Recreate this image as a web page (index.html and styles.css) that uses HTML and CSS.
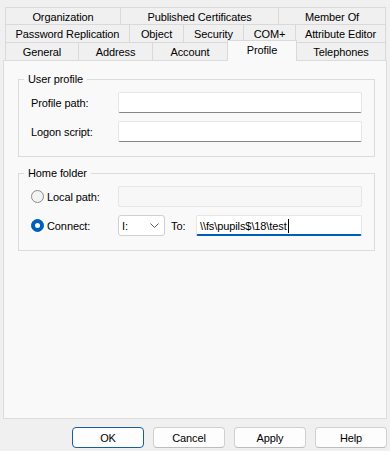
FILE: index.html
```html
<!DOCTYPE html>
<html>
<head>
<meta charset="utf-8">
<link rel="stylesheet" href="styles.css">
</head>
<body>
<div class="dialog">
  <div class="tabs">
    <div class="tab-row row1">
      <div class="tab t-org">Organization</div>
      <div class="tab t-pub">Published Certificates</div>
      <div class="tab t-last">Member Of</div>
    </div>
    <div class="tab-row">
      <div class="tab t-pwd">Password Replication</div>
      <div class="tab t-obj">Object</div>
      <div class="tab t-sec">Security</div>
      <div class="tab t-com">COM+</div>
      <div class="tab t-last">Attribute Editor</div>
    </div>
    <div class="tab-row row3">
      <div class="tab t-gen">General</div>
      <div class="tab t-addr">Address</div>
      <div class="tab t-acc">Account</div>
      <div class="tab t-prof selected">Profile</div>
      <div class="tab t-last">Telephones</div>
    </div>
  </div>
  <div class="panel">
    <fieldset class="group group-user">
      <legend>User profile</legend>
      <div class="field-row">
        <label class="label">Profile path:</label>
        <div class="input"></div>
      </div>
      <div class="field-row">
        <label class="label">Logon script:</label>
        <div class="input"></div>
      </div>
    </fieldset>
    <fieldset class="group group-home">
      <legend>Home folder</legend>
      <div class="field-row">
        <label class="label radio-label"><span class="radio"></span>Local path:</label>
        <div class="input disabled"></div>
      </div>
      <div class="field-row">
        <label class="label radio-label"><span class="radio checked"></span>Connect:</label>
        <div class="combo">
          <span class="combo-value">I:</span>
          <svg class="chevron" width="9" height="5" viewBox="0 0 9 5"><path d="M0.5 0.5 L4.5 4.5 L8.5 0.5" fill="none" stroke="#5a5a5a" stroke-width="1"/></svg>
        </div>
        <span class="to-label">To:</span>
        <div class="input focused"><span class="input-text">\\fs\pupils$\18\test</span><span class="caret"></span></div>
      </div>
    </fieldset>
  </div>
  <div class="buttons">
    <button class="btn default">OK</button>
    <button class="btn">Cancel</button>
    <button class="btn">Apply</button>
    <button class="btn">Help</button>
  </div>
</div>
</body>
</html>
```
FILE: styles.css
```css
* { box-sizing: border-box; }
html, body {
  margin: 0;
  padding: 0;
  background: #f0f0f0;
}
body {
  font-family: "Liberation Sans", Arial, sans-serif;
  font-size: 11px;
  letter-spacing: -0.1px;
  color: #000;
  width: 390px;
  height: 451px;
  overflow: hidden;
}
.dialog {
  padding: 7px 3px 0 3px;
}
.tabs {
  width: 381px;
  margin-left: 2px;
}
.tab-row {
  display: flex;
  height: 18px;
}
.tab-row.row1 { height: 17px; }
.tab-row.row3 { align-items: flex-end; }
.tab {
  display: flex;
  align-items: center;
  justify-content: center;
  height: 100%;
  border-top: 1px solid #d9d9d9;
  border-left: 1px solid #d9d9d9;
  background: #f0f0f0;
  white-space: nowrap;
  padding-top: 1px;
}
.tab.t-last { flex: 1; border-right: 1px solid #d9d9d9; }
.t-org { width: 115px; }
.t-pub { width: 158px; }
.t-pwd { width: 124px; }
.t-obj { width: 54px; }
.t-sec { width: 60px; }
.t-com { width: 52px; }
.t-gen { width: 73px; }
.t-addr { width: 74px; }
.t-acc { width: 75px; }
.t-prof { width: 70px; }
.tab.selected {
  position: relative;
  z-index: 1;
  height: 21px;
  margin-top: -2px;
  margin-bottom: -1px;
  margin-right: -1px;
  border-right: 1px solid #d9d9d9;
  background: #f9f9f9;
  padding-top: 0;
  padding-bottom: 2px;
}
.panel {
  width: 384px;
  height: 359px;
  border: 1px solid #dcdcdc;
  background: #f9f9f9;
  padding: 11px 11px 0 14px;
}
.group {
  margin: 0;
  border: 1px solid #dcdcdc;
  padding: 5px 12px 14px 12px;
  min-width: 0;
}
.group legend {
  padding: 0 4px;
  margin-left: -7px;
  line-height: 15px;
}
.group-home {
  margin-top: 9px;
}
.field-row {
  display: flex;
  align-items: center;
  height: 21px;
}
.field-row + .field-row {
  margin-top: 8px;
}
.label {
  width: 87px;
  flex: none;
  display: flex;
  align-items: center;
}
.radio {
  width: 13px;
  height: 13px;
  border-radius: 50%;
  border: 1px solid #8a8a8a;
  background: #f3f3f3;
  margin-right: 3px;
  position: relative;
  flex: none;
}
.radio.checked {
  background: #005fb8;
  border-color: #005fb8;
}
.radio.checked::after {
  content: "";
  position: absolute;
  left: 3px;
  top: 3px;
  width: 5px;
  height: 5px;
  border-radius: 50%;
  background: #fff;
}
.input {
  flex: 1;
  height: 21px;
  background: #fff;
  border: 1px solid #e6e6e6;
  border-bottom: 1px solid #868686;
  border-radius: 2px;
  display: flex;
  align-items: center;
  padding-left: 3px;
}
.input.disabled {
  background: #f7f7f7;
  border-bottom-color: #e6e6e6;
}
.input.focused {
  border-bottom: 2px solid #005fb8;
  padding-top: 1px;
}
.caret {
  display: inline-block;
  width: 1px;
  height: 14px;
  background: #000;
  margin-left: 1px;
}
.combo {
  width: 47px;
  height: 21px;
  flex: none;
  background: #fff;
  border: 1px solid #d0d0d0;
  border-radius: 3px;
  display: flex;
  align-items: center;
  justify-content: space-between;
  padding: 0 5px 0 3px;
}
.to-label {
  width: 31px;
  flex: none;
  padding-left: 6px;
}
.buttons {
  display: flex;
  justify-content: flex-end;
  gap: 9px;
  margin-top: 8px;
}
.btn {
  width: 72px;
  height: 21px;
  font-family: inherit;
  font-size: 11px;
  letter-spacing: -0.1px;
  color: #000;
  background: #fdfdfd;
  border: 1px solid #d0d0d0;
  border-bottom-color: #bdbdbd;
  border-radius: 4px;
  padding: 0;
}
.btn.default {
  border: 1px solid #1a5d9c;
}
```
